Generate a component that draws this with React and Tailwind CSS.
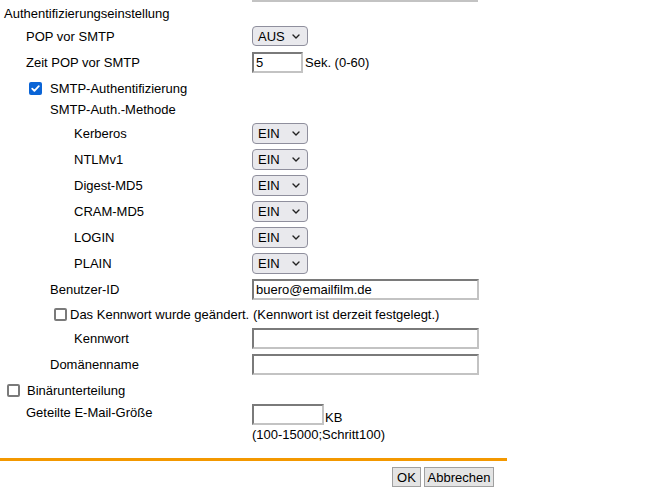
const font = { fontFamily: '"Liberation Sans", Arial, sans-serif' };

function Chevron() {
  return (
    <svg width="8" height="5" viewBox="0 0 8 5" className="shrink-0">
      <path d="M1 1 L4 4 L7 1" fill="none" stroke="#222" strokeWidth="1.4" strokeLinecap="round" strokeLinejoin="round" />
    </svg>
  );
}

function Select({ value, h }) {
  return (
    <div className={`flex ${h} w-[56px] items-center justify-between rounded-[4px] border border-[#8f8f9d] bg-[#e9e9ed] pl-[5px] pr-[7px] text-[13px] text-black`}>
      <span>{value}</span>
      <Chevron />
    </div>
  );
}

function TextBox({ w, value }) {
  return (
    <div
      className={`flex h-[21px] ${w} items-center border-2 border-t-[#7a7a7a] border-l-[#7a7a7a] border-b-[#c3c3c3] border-r-[#c3c3c3] bg-white pl-[2px] text-[13px] text-black`}
    >
      {value}
    </div>
  );
}

function Check({ checked }) {
  if (checked) {
    return (
      <div className="flex h-[13px] w-[13px] items-center justify-center rounded-[2px] bg-[#0a64d6]">
        <svg width="11" height="11" viewBox="0 0 11 11">
          <path d="M2.2 5.6 L4.4 7.8 L8.8 3.2" fill="none" stroke="white" strokeWidth="1.8" strokeLinecap="round" strokeLinejoin="round" />
        </svg>
      </div>
    );
  }
  return <div className="h-[13px] w-[13px] rounded-[2px] border-2 border-[#7a7a7a] bg-white" />;
}

export default function App() {
  const methods = ['Kerberos', 'NTLMv1', 'Digest-MD5', 'CRAM-MD5', 'LOGIN', 'PLAIN'];

  return (
    <div className="h-[488px] w-[647px] overflow-hidden bg-white text-[13px] leading-none text-black" style={font}>
      <div className="ml-[252px] h-[2px] w-[226px] bg-[#c3c3c3]" />

      <div className="flex h-[23px] items-center pl-[4px]">Authentifizierungseinstellung</div>

      <div className="flex h-[22px] items-center">
        <div className="w-[252px] pl-[26px]">POP vor SMTP</div>
        <Select value="AUS" h="h-[20px]" />
      </div>

      <div className="flex h-[30px] items-center">
        <div className="w-[252px] pl-[26px]">Zeit POP vor SMTP</div>
        <TextBox w="w-[51px]" value="5" />
        <span className="pl-[2px]">Sek. (0-60)</span>
      </div>

      <div className="flex h-[22px] items-center">
        <div className="flex w-[252px] items-center pl-[29px]">
          <Check checked />
          <span className="pl-[8px]">SMTP-Authentifizierung</span>
        </div>
      </div>

      <div className="flex h-[21px] items-center pl-[50px]">SMTP-Auth.-Methode</div>

      {methods.map((m) => (
        <div key={m} className="flex h-[26px] items-center">
          <div className="w-[252px] pl-[74px]">{m}</div>
          <Select value="EIN" h="h-[21px]" />
        </div>
      ))}

      <div className="flex h-[26px] items-center">
        <div className="w-[252px] pl-[50px]">Benutzer-ID</div>
        <TextBox w="w-[227px]" value="buero@emailfilm.de" />
      </div>

      <div className="flex h-[24px] items-center">
        <div className="flex w-[253px] items-center pl-[54px]">
          <Check />
          <span className="pl-[3px]">Das Kennwort wurde geändert.</span>
        </div>
        <span>(Kennwort ist derzeit festgelegt.)</span>
      </div>

      <div className="flex h-[25px] items-center">
        <div className="w-[252px] pl-[74px]">Kennwort</div>
        <TextBox w="w-[227px]" value="" />
      </div>

      <div className="flex h-[27px] items-center">
        <div className="w-[252px] pl-[50px]">Domänenname</div>
        <TextBox w="w-[227px]" value="" />
      </div>

      <div className="flex h-[24px] items-center">
        <div className="flex w-[252px] items-center pl-[7px]">
          <Check />
          <span className="pl-[7px]">Binärunterteilung</span>
        </div>
      </div>

      <div className="flex h-[44px] pt-[2px]">
        <div className="w-[252px] pl-[26px] pt-[2px]">Geteilte E-Mail-Größe</div>
        <div className="flex flex-col">
          <div className="flex items-end">
            <TextBox w="w-[72px]" value="" />
            <span className="pl-[1px] pb-[1px]">KB</span>
          </div>
          <div className="pt-[3px]">(100-15000;Schritt100)</div>
        </div>
      </div>

      <div className="mt-[12px] h-[3px] w-[507px] bg-[#f39800]" />

      <div className="flex w-[494px] justify-end gap-[3px] pt-[6px]">
        <div className="flex h-[20px] w-[29px] items-center justify-center border border-[#a0a0a0] bg-[#e4e4e4]">OK</div>
        <div className="flex h-[20px] w-[70px] items-center justify-center border border-[#a0a0a0] bg-[#e4e4e4]">Abbrechen</div>
      </div>
    </div>
  );
}
